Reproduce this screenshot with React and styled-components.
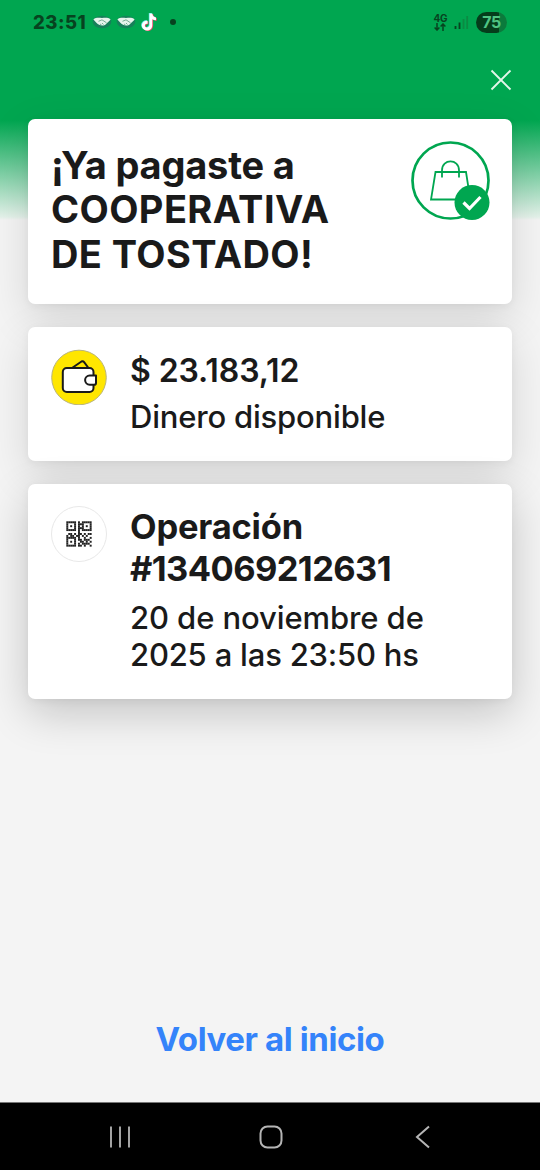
import styled, { createGlobalStyle } from "styled-components"

const GlobalStyle = createGlobalStyle`
    * {
        box-sizing: border-box;
    }

    body {
        margin: 0;
        background-color: #f4f4f4;
        font-family: Inter, "Liberation Sans", sans-serif;
        color: #1a1a1a;
    }
`
const Screen = styled.div`
    display: flex;
    flex-direction: column;
    width: 540px;
    height: 1170px;
    overflow: hidden;
    background: linear-gradient(#00a650 0px, #00a650 120px, #e4f2ea 217px, #f4f4f4 220px);
`
const StatusBar = styled.div`
    display: flex;
    justify-content: space-between;
    align-items: center;
    height: 44px;
    padding: 0 33px 0 33px;
    color: #07431f;
`
const StatusGroup = styled.div`
    display: flex;
    align-items: center;
    gap: ${(props) => props.gap};
`
const Clock = styled.div`
    font-size: 18.5px;
    font-weight: 800;
    line-height: 22px;
    letter-spacing: 0.5px;
    margin-right: 2px;
`
const Dot = styled.div`
    width: 6px;
    height: 6px;
    margin-left: 8px;
    border-radius: 50%;
    background-color: #07431f;
`
const Network = styled.div`
    display: flex;
    flex-direction: column;
    align-items: center;
    font-size: 10px;
    font-weight: 700;
    line-height: 10px;
    letter-spacing: -0.4px;
`
const Battery = styled.div`
    display: flex;
    align-items: center;
    justify-content: center;
    width: 31px;
    height: 21px;
    border-radius: 11px;
    background: linear-gradient(90deg, #053d1b 75%, #0b7a3c 75%);
    color: #4fc483;
    font-size: 16px;
    font-weight: 700;
    letter-spacing: -0.5px;
`
const TopBar = styled.div`
    display: flex;
    justify-content: flex-end;
    height: 75px;
    padding: 25px 28px 0 0;
`
const CloseButton = styled.button`
    display: flex;
    width: 22px;
    height: 22px;
    padding: 0;
    border: none;
    background: none;
`
const CardList = styled.main`
    display: flex;
    flex-direction: column;
    gap: 22.5px;
    flex: 1;
    padding: 0 28px;
`
const Card = styled.section`
    display: flex;
    height: ${(props) => props.height};
    padding: ${(props) => props.padding};
    border-radius: 7px;
    background-color: #fff;
    box-shadow: 0 14px 44px rgba(0, 0, 0, ${(props) => (props.last ? "0.2" : "0.13")}), 0 2px 8px rgba(0, 0, 0, 0.05);
`
const CardText = styled.div`
    flex: 1;
`
const IconSlot = styled.div`
    width: 56px;
    height: 56px;
    margin-right: 23.5px;
`
const Title = styled.h1`
    flex: 1;
    margin: 2px 0 0;
    font-size: 38px;
    font-weight: 700;
    line-height: 44.4px;
`
const Amount = styled.div`
    font-size: 32px;
    font-weight: 600;
    line-height: 43px;
`
const Operation = styled.div`
    font-size: 34.5px;
    font-weight: 650;
    line-height: 42.5px;
`
const Detail = styled.div`
    margin-top: ${(props) => props.top};
    font-size: 31px;
    font-weight: 450;
    line-height: 37px;
`
const Line = styled.span`
    display: block;
    white-space: nowrap;
    letter-spacing: ${(props) => props.spacing};
`
const HomeLink = styled.a`
    display: flex;
    justify-content: center;
    height: 83px;
    font-size: 33px;
    font-weight: 650;
    line-height: 40px;
    color: #3483fa;
`
const NavBar = styled.nav`
    display: flex;
    justify-content: space-between;
    align-items: center;
    height: 68px;
    padding: 0 109px;
    border-top: 1px solid #777;
    background-color: #000;
`

function HandshakeIcon() {
    return (
        <svg width="20" height="14" viewBox="0 0 20 14">
            <ellipse cx="10" cy="7" rx="9.3" ry="6.2" fill="#17805a" />
            <path d="M1.4 4.500C4 2.200 7 3 10 3s6-.8 8.600 1.500C17.500 6 16.500 6.800 15 8c-1.500 2-3.500 2.800-5 2.500C8 10.500 6 9.500 4.600 8z" fill="#e6f4ec" />
            <path d="M6.500 6.300 10 4.800l4.500 3M8 9l1.500 1M10 8l1.500 1.500" fill="none" stroke="#5b9a7c" strokeWidth="0.8" />
        </svg>
    )
}

function TikTokIcon({ color, x, y }) {
    return (
        <path
            transform={`translate(${x} ${y})`}
            d="M9.300 1h2.800c.2 2.300 1.600 3.700 3.700 3.900v2.900c-1.400 0-2.600-.4-3.700-1.100v6c0 6.600-9.600 7-10.400 1.100-.4-3.300 2.200-6 5.700-5.500v3c-1.600-.4-2.800.5-2.700 1.900.2 2.500 4.600 2.300 4.600-.9z"
            fill={color}
        />
    )
}

function SignalIcon() {
    return (
        <svg width="15" height="14" viewBox="0 0 15 14">
            <path d="M1.500 11v3M5.500 7.500V14" stroke="#07431f" strokeWidth="1.800" />
            <path d="M9.500 4v10M13.200 1v13" stroke="#0b8a43" strokeWidth="1.800" />
        </svg>
    )
}

function BagIcon() {
    return (
        <svg width="80" height="80" viewBox="0 0 80 80" fill="none" stroke="#00a650">
            <circle cx="39.500" cy="39.500" r="38" strokeWidth="2.700" />
            <path d="M24.500 31h30.500l4.300 27.500H20z" strokeWidth="1.800" />
            <path d="M31 36.500v-7.200C31 17.500 48 17.500 48 29.300v7.200" strokeWidth="1.800" />
            <circle cx="61" cy="61.500" r="17.500" fill="#00a650" stroke="none" />
            <path d="m52.500 61.500 6 6L69.500 56" stroke="#fff" strokeWidth="3.200" />
        </svg>
    )
}

function WalletIcon() {
    return (
        <svg width="56" height="56" viewBox="0 0 56 56">
            <circle cx="28" cy="28.500" r="27.300" fill="#ffe600" stroke="#b9b47c" strokeWidth="1" />
            <g fill="#fff" stroke="#1a1a1a" strokeWidth="2" strokeLinejoin="round">
                <path d="M21 19 30.500 12.500q1.500-.8 2.600.6L37.500 19z" fill="#ffe600" />
                <rect x="11.800" y="19" width="30.700" height="24" rx="4" />
                <path d="M45 26.500h-6.300a4.600 4.600 0 0 0 0 9.200H43.200q1.800 0 1.800-1.800z" />
            </g>
        </svg>
    )
}

const qrRows = [
    "11111.1.11111",
    "1...1.111...1",
    "1.1.1.1.1.1.1",
    "1...1.111...1",
    "11111.1.11111",
    "......1......",
    ".11.1.11.1.11",
    "1.11.11.1.1..",
    "11111.1..1..1",
    "1...1.11.111.",
    "1.1.1..11.1.1",
    "1...1.1.1111.",
    "11111.11.1..1",
]

function QrIcon() {
    return (
        <svg width="56" height="56" viewBox="0 0 56 56">
            <circle cx="28" cy="28" r="27.500" fill="#fff" stroke="#e8e8e8" strokeWidth="1" />
            <g transform="translate(15.300 15.300) scale(1.950)" fill="#222">
                {qrRows.map((row, y) =>
                    row.split("").map((cell, x) =>
                        cell === "1" && <rect key={`${x}-${y}`} x={x} y={y} width="1" height="1" />
                    )
                )}
            </g>
        </svg>
    )
}

function App() {
    return (
        <Screen>
            <GlobalStyle />
            <StatusBar>
                <StatusGroup gap="4px">
                    <Clock>23:51</Clock>
                    <HandshakeIcon />
                    <HandshakeIcon />
                    <svg width="18" height="20" viewBox="0 0 18 20">
                        <TikTokIcon color="#5ee8e4" x={-0.5} y={0} />
                        <TikTokIcon color="#f0436a" x={1} y={1} />
                        <TikTokIcon color="#fff" x={0.2} y={0.5} />
                    </svg>
                    <Dot />
                </StatusGroup>
                <StatusGroup gap="7px">
                    <Network>
                        4G
                        <svg width="12" height="8" viewBox="0 0 12 8" fill="none" stroke="#07431f" strokeWidth="1.500">
                            <path d="M3 0v7M.6 4.500 3 7l2.400-2.500M9 8V1M6.600 3.500 9 1l2.400 2.500" />
                        </svg>
                    </Network>
                    <SignalIcon />
                    <Battery>75</Battery>
                </StatusGroup>
            </StatusBar>
            <TopBar>
                <CloseButton aria-label="Cerrar">
                    <svg width="22" height="22" viewBox="0 0 22 22" stroke="#e3f6ea" strokeWidth="1.900">
                        <path d="m1.500 1.500 19 19M20.500 1.500l-19 19" />
                    </svg>
                </CloseButton>
            </TopBar>
            <CardList>
                <Card height="185px" padding="22px 21px 0 23px">
                    <Title>
                        <Line spacing="-0.2px">¡Ya pagaste a</Line>
                        <Line spacing="0.4px">COOPERATIVA</Line>
                        <Line spacing="0.4px">DE TOSTADO!</Line>
                    </Title>
                    <BagIcon />
                </Card>
                <Card height="134.5px" padding="22px 23px 0 22.500px">
                    <IconSlot>
                        <WalletIcon />
                    </IconSlot>
                    <CardText>
                        <Amount>
                            <Line spacing="-0.1px">$ 23.183,12</Line>
                        </Amount>
                        <Detail top="6px">
                            <Line spacing="-0.2px">Dinero disponible</Line>
                        </Detail>
                    </CardText>
                </Card>
                <Card last height="215px" padding="22px 23px 0 22.500px">
                    <IconSlot>
                        <QrIcon />
                    </IconSlot>
                    <CardText>
                        <Operation>
                            <Line spacing="-0.2px">Operación</Line>
                            <Line spacing="-0.6px">#134069212631</Line>
                        </Operation>
                        <Detail top="8px">
                            <Line spacing="-0.1px">20 de noviembre de</Line>
                            <Line spacing="-0.2px">2025 a las 23:50 hs</Line>
                        </Detail>
                    </CardText>
                </Card>
            </CardList>
            <HomeLink>
                <Line spacing="-0.4px">Volver al inicio</Line>
            </HomeLink>
            <NavBar>
                <svg width="23" height="24" viewBox="0 0 23 24" stroke="#b5b5b5" strokeWidth="1.800">
                    <path d="M2 1.500v21M11 1.500v21M20 1.500v21" />
                </svg>
                <svg width="30" height="24" viewBox="0 0 30 24" fill="none" stroke="#b5b5b5" strokeWidth="2">
                    <rect x="1.500" y="1.500" width="21" height="21" rx="7" />
                </svg>
                <svg width="16" height="24" viewBox="0 0 16 24" fill="none" stroke="#b5b5b5" strokeWidth="2">
                    <path d="M14 1.500 2 12l12 10.500" />
                </svg>
            </NavBar>
        </Screen>
    )
}

export default App
